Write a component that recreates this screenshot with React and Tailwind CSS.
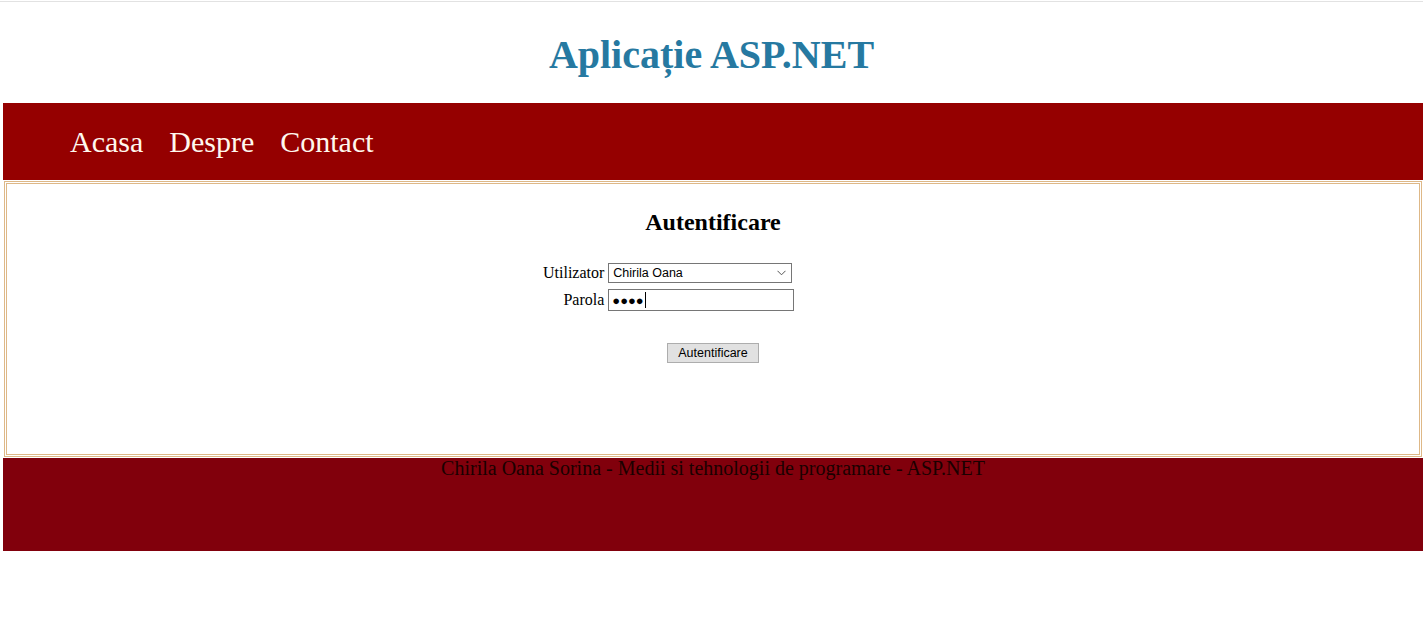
import React from "react";

const serif = { fontFamily: '"Liberation Serif", "Times New Roman", serif' };
const sans = { fontFamily: '"Liberation Sans", Arial, sans-serif' };

export default function App() {
  return (
    <div className="w-[1423px] h-[626px] bg-white overflow-hidden" style={serif}>
      <div className="h-[1px] bg-white" />
      <div className="h-[1px] bg-[#e2e2e2]" />
      <header className="h-[101px] pt-[23px]">
        <h1 className="text-center text-[40px] leading-normal font-bold text-[#2679a1]">
          Aplicație ASP.NET
        </h1>
      </header>
      <div className="ml-[3px]">
        <nav className="h-[77px] bg-[#950000] pt-[22px] pl-[67px] flex gap-[26px] text-[30px] leading-[34px] text-[#fff8ee]">
          <a>Acasa</a>
          <a>Despre</a>
          <a>Contact</a>
        </nav>
        <main className="mx-[1px] my-[1px] h-[276px] border-[3px] border-double border-[#deb887] pt-[24px]">
          <h2 className="text-center text-[24px] leading-[28px] font-bold text-black">Autentificare</h2>
          <div className="w-[340px] mx-auto mt-[27px]">
            <div className="grid grid-cols-[auto_auto] justify-start gap-x-[4px] gap-y-[6px] items-center text-[16px] leading-[18px] text-black">
              <span className="text-right">Utilizator</span>
              <div
                className="w-[184px] h-[20px] border border-[#767676] bg-white flex items-center justify-between pl-[4px] pr-[5px] text-[12.5px] text-black"
                style={sans}
              >
                <span>Chirila Oana</span>
                <svg width="9" height="6" viewBox="0 0 9 6" fill="none">
                  <path d="M0.5 0.8 L4.5 4.8 L8.5 0.8" stroke="#555" strokeWidth="1" />
                </svg>
              </div>
              <span className="text-right">Parola</span>
              <div className="w-[186px] h-[22px] border border-[#767676] bg-white flex items-center pl-[3px]">
                <span className="text-[13px] leading-none text-black" style={sans}>●●●●</span>
                <span className="w-[1px] h-[16px] bg-black ml-[1px]" />
              </div>
            </div>
          </div>
          <div className="flex justify-center mt-[32px]">
            <button
              className="w-[92px] h-[20px] bg-[#e1e1e1] border border-[#adadad] text-[12.5px] leading-none text-black flex items-center justify-center"
              style={sans}
            >
              Autentificare
            </button>
          </div>
        </main>
        <footer className="h-[93px] bg-[#81000c] text-center text-[20px] leading-[20px] text-[#1a0000]">
          Chirila Oana Sorina - Medii si tehnologii de programare - ASP.NET
        </footer>
      </div>
    </div>
  );
}
